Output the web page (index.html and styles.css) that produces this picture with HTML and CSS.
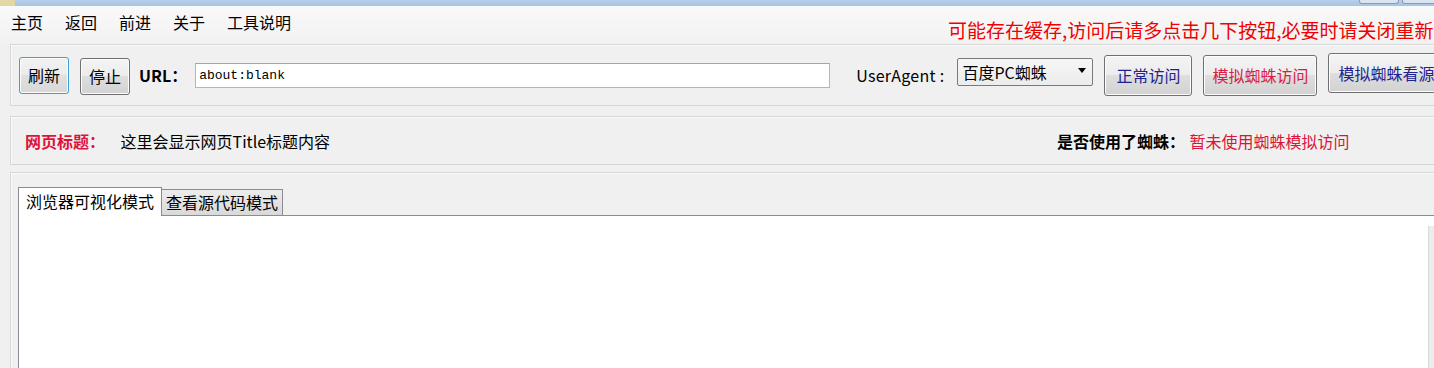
FILE: index.html
```html
<!DOCTYPE html>
<html lang="zh-CN">

<head>
  <meta charset="UTF-8" />
  <title>蜘蛛模拟访问工具</title>
  <link rel="stylesheet" href="styles.css">
</head>

<body>

  <div class="titlebar">
    <span class="title-icon"></span>
    <div class="win-btns">
      <span class="win-btn"></span>
      <span class="win-btn wide"></span>
    </div>
  </div>

  <div class="menubar">
    <ul class="menu">
      <li>主页</li>
      <li>返回</li>
      <li>前进</li>
      <li>关于</li>
      <li>工具说明</li>
    </ul>
    <div class="notice">可能存在缓存,访问后请多点击几下按钮,必要时请关闭重新</div>
  </div>

  <div class="panel toolbar">
    <button class="btn focus">刷新</button>
    <button class="btn stop">停止</button>
    <span class="field-label">URL：</span>
    <input class="url-input" type="text" value="about:blank">
    <span class="ua-label">UserAgent :</span>
    <div class="ua-select">百度PC蜘蛛<span class="caret"></span></div>
    <button class="btn big normal">正常访问</button>
    <button class="btn big spider">模拟蜘蛛访问</button>
    <button class="btn big source">模拟蜘蛛看源</button>
  </div>

  <div class="panel info">
    <div class="info-left">
      <span class="info-label">网页标题：</span>
      <span class="info-value">这里会显示网页Title标题内容</span>
    </div>
    <div class="info-right">
      <span class="info-label dark">是否使用了蜘蛛：</span>
      <span class="info-value red">暂未使用蜘蛛模拟访问</span>
    </div>
  </div>

  <div class="panel viewer">
    <div class="tabs">
      <div class="tab active">浏览器可视化模式</div>
      <div class="tab">查看源代码模式</div>
    </div>
    <div class="tab-body">
      <div class="scroll-edge"></div>
    </div>
  </div>

</body>

</html>
```

FILE: styles.css
```css
body {
  margin: 0;
  width: 1434px;
  height: 368px;
  overflow: hidden;
  background-color: #f0f0f0;
  font-family: "Noto Sans CJK SC", sans-serif;
  font-size: 16px;
  color: #000;
}

/* window frame remnant */
.titlebar {
  height: 6px;
  display: flex;
  background: linear-gradient(#b8cfea, #a9c3e4);
}

.title-icon {
  width: 15px;
  background-color: #e3d7a4;
}

.win-btns {
  margin-left: auto;
  display: flex;
  gap: 3px;
  margin-right: -4px;
}

.win-btn {
  width: 38px;
  height: 3px;
  border: 1px solid #8c9aab;
  border-top: none;
  border-radius: 0 0 3px 3px;
  background-color: #dbe5f1;
}

.win-btn.wide {
  width: 34px;
}

/* menu */
.menubar {
  height: 37px;
  display: flex;
  align-items: flex-start;
  background: linear-gradient(#f9f9f9, #f2f2f2);
}

.menu {
  flex: 0 0 948px;
  box-sizing: border-box;
  display: flex;
  align-items: center;
  height: 32px;
  margin: 0;
  padding: 0 0 0 11px;
  list-style: none;
}

.menu li {
  margin-right: 22px;
  line-height: 20px;
}

.notice {
  margin-top: 14px;
  line-height: 20px;
  font-size: 19px;
  color: #f00000;
  white-space: nowrap;
}

/* group boxes */
.panel {
  margin: 0 -20px 0 10px;
  border: 1px solid #d6d6d6;
  box-shadow: inset 1px 1px 0 #fbfbfb;
  background-color: #f0f0f0;
}

.toolbar {
  margin-top: 1px;
  height: 60px;
  display: flex;
  align-items: center;
  padding-left: 8px;
}

.toolbar > * {
  flex-shrink: 0;
  white-space: nowrap;
}

.btn {
  font-family: "Noto Sans CJK SC", sans-serif;
  font-size: 16px;
  color: #000;
  width: 50px;
  height: 37px;
  padding: 0;
  border: 1px solid #707070;
  border-radius: 3px;
  background: linear-gradient(#f4f4f4, #ececec 50%, #dedede 50%, #d2d2d2);
  box-shadow: inset 0 0 0 1px #fcfcfc;
  line-height: 1;
}

.btn.focus {
  border-color: #3d9fd8;
  background: linear-gradient(#f2f2f2, #ebebeb 50%, #e0e0e0 50%, #d8d8d8);
}

.btn.stop {
  margin-left: 11px;
  margin-top: 2px;
}

.field-label {
  margin-left: 9px;
  font-weight: bold;
}

.url-input {
  margin-left: 8px;
  width: 635px;
  height: 25px;
  box-sizing: border-box;
  border: 1px solid #b4b6bc;
  border-top-color: #a3a5ab;
  background: #fff;
  padding: 0 3px;
  font-family: "Liberation Mono", monospace;
  font-size: 13px;
  color: #000;
}

.ua-label {
  margin-left: 26px;
  letter-spacing: 0.3px;
}

.ua-select {
  margin-left: 13px;
  margin-bottom: 6px;
  width: 136px;
  height: 28px;
  box-sizing: border-box;
  border: 1px solid #7a7a7a;
  border-radius: 2px;
  background: linear-gradient(#f6f6f6, #ececec);
  display: flex;
  align-items: center;
  padding-left: 4px;
}

.caret {
  margin-left: auto;
  margin-right: 6px;
  margin-bottom: 4px;
  border-left: 4px solid transparent;
  border-right: 4px solid transparent;
  border-top: 5px solid #000;
}

.btn.big {
  height: 41px;
  margin-left: 11px;
}

.btn.normal {
  width: 88px;
  color: #1f2390;
}

.btn.spider {
  width: 114px;
  color: #d61f45;
}

.btn.source {
  width: 132px;
  height: 40px;
  margin-bottom: 4px;
  padding-left: 9px;
  text-align: left;
  color: #1f2390;
}

/* title / spider status */
.info {
  margin-top: 10px;
  height: 47px;
  display: flex;
  align-items: center;
  padding-left: 14px;
}

.info-left {
  flex: 0 0 1032px;
}

.info-label {
  font-weight: bold;
  color: #dc143c;
}

.info-label.dark {
  color: #000;
}

.info-value {
  margin-left: 12px;
}

.info-value.red {
  margin-left: 1px;
  color: #dc143c;
}

/* tab control */
.viewer {
  margin-top: 7px;
  height: 181px;
  padding: 14px 0 0 7px;
  border-bottom: none;
}

.tabs {
  width: 1416px;
  height: 28px;
  display: flex;
  align-items: flex-end;
  border-bottom: 1px solid #898c95;
}

.tab {
  height: 25px;
  line-height: 24px;
  padding: 0 4px;
  border: 1px solid #898c95;
  border-bottom: none;
  background: linear-gradient(#ececec, #d9d9d9);
}

.tab.active {
  height: 28px;
  line-height: 27px;
  padding: 0 7px;
  margin-bottom: -1px;
  background: #fff;
}

.tab.active + .tab {
  border-left: none;
}

.tab-body {
  width: 1415px;
  height: 152px;
  border-left: 1px solid #898c95;
  background: #fff;
  display: flex;
  justify-content: flex-end;
}

.scroll-edge {
  width: 5px;
  margin-top: 10px;
  border-left: 1px solid #d9d9d9;
  background-color: #ececec;
}
```
